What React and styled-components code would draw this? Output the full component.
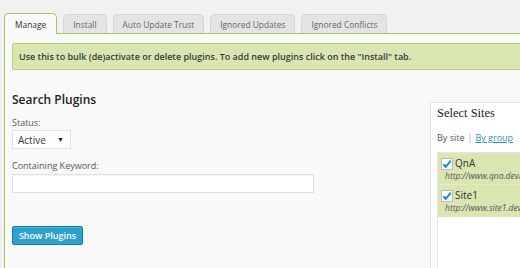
import React from "react";
import styled, { createGlobalStyle } from "styled-components";

const GlobalStyle = createGlobalStyle`
  html, body {
    margin: 0;
    padding: 0;
    background: #f1f1f1;
    overflow: hidden;
  }
  body {
    font-family: "Open Sans", "Liberation Sans", sans-serif;
    color: #444;
  }
`;

const Page = styled.div`
  width: 720px;
  height: 268px;
  padding: 13px 0 0 4px;
  box-sizing: border-box;
  display: flex;
  flex-direction: column;
`;

const Tabs = styled.div`
  display: flex;
  gap: 6px;
  height: 20px;
  align-items: flex-end;
  position: relative;
  z-index: 1;
`;

const Tab = styled.div`
  height: ${(p) => (p.$active ? "21px" : "19px")};
  margin-bottom: ${(p) => (p.$active ? "-1px" : "0")};
  padding: 0 ${(p) => (p.$active ? "10px" : "9px")};
  box-sizing: border-box;
  display: flex;
  align-items: center;
  font-size: 8.4px;
  color: ${(p) => (p.$active ? "#333" : "#666")};
  background: ${(p) => (p.$active ? "#f9f9f9" : "#e4e4e4")};
  border: 1px solid ${(p) => (p.$active ? "#a2c95a" : "#d4d4d4")};
  border-bottom: none;
  border-radius: 5px 5px 0 0;
`;

const Panel = styled.div`
  flex: 1;
  background: #f9f9f9;
  border-top: 1px solid #a2c95a;
  border-left: 1px solid #a2c95a;
  padding: 9px 0 0 7px;
  display: flex;
  flex-direction: column;
`;

const Notice = styled.div`
  height: 27px;
  box-sizing: border-box;
  background: #d9e6b2;
  border: 1px solid #b2d06c;
  border-radius: 2px;
  padding: 0 6px;
  display: flex;
  align-items: center;
  font-size: 9px;
  font-weight: 600;
  color: #3a3a3a;
`;

const Body = styled.div`
  display: flex;
  flex: 1;
  margin-top: 16px;
`;

const Left = styled.div`
  width: 418px;
  display: flex;
  flex-direction: column;
`;

const Heading = styled.h3`
  margin: 6px 0 0;
  font-size: 12px;
  font-weight: 600;
  color: #222;
  line-height: 16px;
`;

const Label = styled.div`
  font-size: 9px;
  color: #555;
  line-height: 12px;
  margin-top: ${(p) => p.$top || 0}px;
`;

const Select = styled.div`
  width: 59px;
  height: 19px;
  margin-top: 1px;
  box-sizing: border-box;
  background: #fff;
  border: 1px solid #e2e2e2;
  display: flex;
  align-items: center;
  justify-content: space-between;
  padding: 0 6px 0 5px;
  font-size: 10px;
  color: #333;
`;

const Arrow = styled.span`
  font-size: 7px;
  color: #222;
`;

const Input = styled.div`
  width: 302px;
  height: 19px;
  margin-top: 2px;
  box-sizing: border-box;
  background: #fff;
  border: 1px solid #e0e0e0;
  box-shadow: inset 0 1px 1px rgba(0, 0, 0, 0.04);
`;

const Button = styled.button`
  margin-top: 33px;
  width: 71px;
  height: 19px;
  padding: 0;
  background: #2ea2cc;
  border: 1px solid #0f7eab;
  border-radius: 2px;
  color: #fff;
  font-family: inherit;
  font-size: 9px;
  font-weight: 600;
  box-shadow: inset 0 1px 0 rgba(120, 200, 230, 0.5);
`;

const SitesBox = styled.div`
  width: 240px;
  margin-top: 16px;
  background: #fff;
  border: 1px solid #e5e5e5;
  border-bottom: none;
  padding: 1px 0 0 6px;
  display: flex;
  flex-direction: column;
`;

const BoxTitle = styled.div`
  font-family: "Liberation Serif", "DejaVu Serif", serif;
  font-size: 12.5px;
  color: #222;
  line-height: 18px;
`;

const Switcher = styled.div`
  margin-top: 10px;
  font-size: 9px;
  color: #555;
  line-height: 12px;
`;

const Sep = styled.span`
  color: #c792a8;
  margin: 0 3px;
`;

const LinkText = styled.span`
  color: #2a8fc4;
  text-decoration: underline;
`;

const SiteList = styled.div`
  flex: 1;
  margin-top: 8px;
  border-left: 1px solid #e5e5e5;
  border-top: 1px solid #e5e5e5;
`;

const Site = styled.div`
  background: #d9e6b2;
  padding: 4px 0 2px 3px;
  border-bottom: 1px dotted ${(p) => (p.$last ? "transparent" : "#eef3dc")};
`;

const SiteName = styled.div`
  display: flex;
  align-items: center;
  gap: 2px;
  font-size: 10px;
  color: #333;
  line-height: 13px;
`;

const Url = styled.div`
  font-size: 8.5px;
  font-style: italic;
  color: #555;
  padding-left: 4px;
  line-height: 12px;
  white-space: nowrap;
`;

const Check = () => (
  <svg width="12" height="12" viewBox="0 0 12 12">
    <rect x="0.5" y="0.5" width="11" height="11" fill="#fff" stroke="#b4b9be" />
    <path d="M2.4 6.2 L4.8 8.8 L9.8 2.6" fill="none" stroke="#1e8cbe" strokeWidth="2" />
  </svg>
);

const tabs = ["Manage", "Install", "Auto Update Trust", "Ignored Updates", "Ignored Conflicts"];

const sites = [
  { name: "QnA", url: "http://www.qna.dev/" },
  { name: "Site1", url: "http://www.site1.dev/" },
];

export default function App() {
  return (
    <>
      <GlobalStyle />
      <Page>
        <Tabs>
          {tabs.map((t, i) => (
            <Tab key={t} $active={i === 0}>
              {t}
            </Tab>
          ))}
        </Tabs>
        <Panel>
          <Notice>
            Use this to bulk (de)activate or delete plugins. To add new plugins click on the "Install" tab.
          </Notice>
          <Body>
            <Left>
              <Heading>Search Plugins</Heading>
              <Label $top={9}>Status:</Label>
              <Select>
                Active <Arrow>▼</Arrow>
              </Select>
              <Label $top={11}>Containing Keyword:</Label>
              <Input />
              <Button>Show Plugins</Button>
            </Left>
            <SitesBox>
              <BoxTitle>Select Sites</BoxTitle>
              <Switcher>
                By site<Sep>|</Sep>
                <LinkText>By group</LinkText>
              </Switcher>
              <SiteList>
                {sites.map((s, i) => (
                  <Site key={s.name} $last={i === sites.length - 1}>
                    <SiteName>
                      <Check />
                      {s.name}
                    </SiteName>
                    <Url>{s.url}</Url>
                  </Site>
                ))}
              </SiteList>
            </SitesBox>
          </Body>
        </Panel>
      </Page>
    </>
  );
}
